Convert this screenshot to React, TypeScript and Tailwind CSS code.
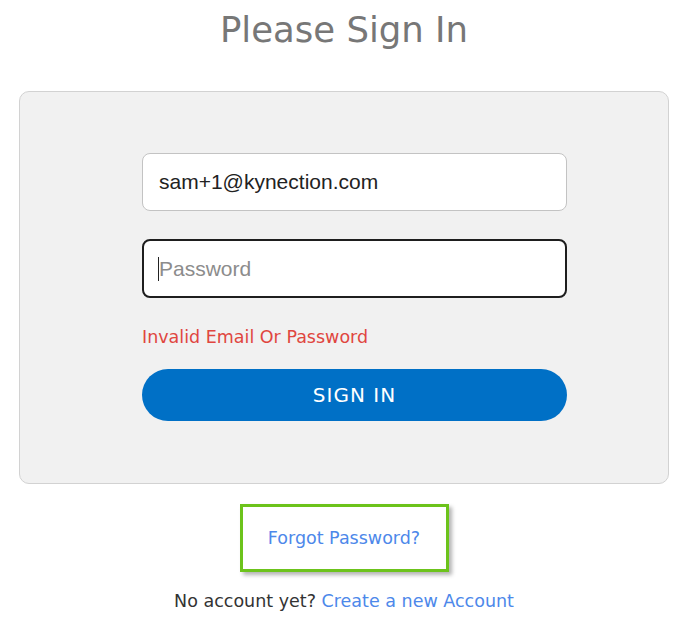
export default function App() {
  return (
    <div className="min-h-[621px] w-full bg-white" style={{ fontFamily: '"DejaVu Sans", Verdana, sans-serif' }}>
      <div className="ml-[19px] flex w-[650px] flex-col items-center">
        <h1 className="mt-[8px] text-[35.5px] leading-[44px] font-normal text-[#777777]">Please Sign In</h1>

        <div className="mt-[39px] w-full rounded-[10px] border border-[#d2d2d2] bg-[#f1f1f1] pt-[61px] pr-[101px] pb-[62px] pl-[122px]">
          <form className="flex flex-col" onSubmit={(e) => e.preventDefault()}>
            <input
              type="email"
              defaultValue="sam+1@kynection.com"
              className="h-[58px] w-full rounded-[8px] border border-[#c3c3c3] bg-white px-[16px] text-[21px] text-[#222] outline-none"
              style={{ fontFamily: '"Liberation Sans", Arial, sans-serif' }}
            />
            <div className="relative mt-[28px]">
              <input
                type="password"
                placeholder="Password"
                className="h-[59px] w-full rounded-[8px] border-2 border-[#1e1e1e] bg-white px-[15px] text-[21px] text-[#222] outline-none placeholder:text-[#8c8c8c]"
                style={{ fontFamily: '"Liberation Sans", Arial, sans-serif' }}
              />
              <span className="pointer-events-none absolute top-[18px] left-[16px] h-[24px] w-[1px] bg-[#222]" />
            </div>
            <p className="mt-[28px] text-[17.5px] leading-[22px] text-[#e0463f]">Invalid Email Or Password</p>
            <button
              type="submit"
              className="mt-[21px] h-[52px] w-full rounded-full bg-[#0070c6] text-[20px] tracking-[1px] text-white"
            >
              SIGN IN
            </button>
          </form>
        </div>

        <div className="mt-[20px] flex h-[68px] w-[209px] items-center justify-center border-[3px] border-[#6cc31b] bg-white shadow-[3px_3px_4px_rgba(0,0,0,0.3)]">
          <a href="#" className="text-[17.5px] text-[#4d88ea]">Forgot Password?</a>
        </div>

        <p className="mt-[18px] text-[17.5px] leading-[22px] text-[#333]">
          No account yet? <a href="#" className="text-[#4d88ea]">Create a new Account</a>
        </p>
      </div>
    </div>
  );
}
